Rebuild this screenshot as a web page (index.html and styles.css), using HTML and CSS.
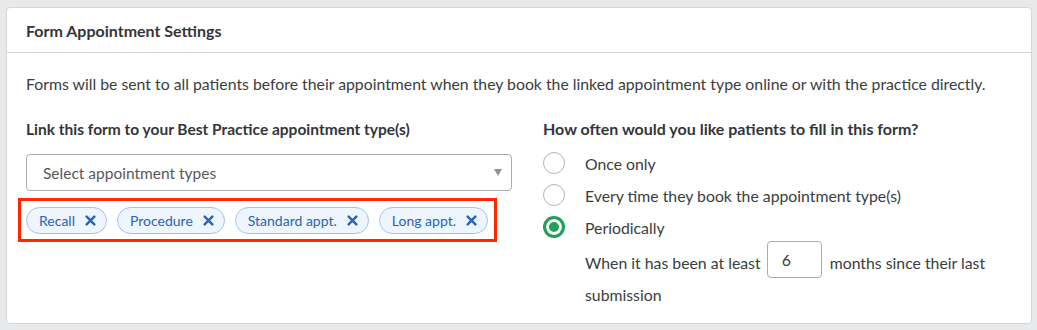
FILE: index.html
```html
<!DOCTYPE html>
<html lang="en">
<head>
<meta charset="utf-8">
<title>Form Appointment Settings</title>
<link rel="stylesheet" href="styles.css">
</head>
<body>
<div class="card">
  <div class="card-header">Form Appointment Settings</div>
  <div class="card-body">
    <p class="desc">Forms will be sent to all patients before their appointment when they book the linked appointment type online or with the practice directly.</p>
    <div class="cols">
      <div class="col-left">
        <div class="label label-left">Link this form to your Best Practice appointment type(s)</div>
        <div class="select">
          <span class="placeholder">Select appointment types</span>
          <span class="caret"></span>
        </div>
        <div class="tags">
          <span class="tag">Recall<svg class="x" viewBox="0 0 10 10"><path d="M1.5 1.5 8.5 8.5M8.5 1.5 1.5 8.5"/></svg></span>
          <span class="tag">Procedure<svg class="x" viewBox="0 0 10 10"><path d="M1.5 1.5 8.5 8.5M8.5 1.5 1.5 8.5"/></svg></span>
          <span class="tag">Standard appt.<svg class="x" viewBox="0 0 10 10"><path d="M1.5 1.5 8.5 8.5M8.5 1.5 1.5 8.5"/></svg></span>
          <span class="tag">Long appt.<svg class="x" viewBox="0 0 10 10"><path d="M1.5 1.5 8.5 8.5M8.5 1.5 1.5 8.5"/></svg></span>
        </div>
      </div>
      <div class="col-right">
        <div class="label">How often would you like patients to fill in this form?</div>
        <div class="radios">
          <div class="radio"><span class="circle"></span><span>Once only</span></div>
          <div class="radio"><span class="circle"></span><span>Every time they book the appointment type(s)</span></div>
          <div class="radio"><span class="circle checked"></span><span>Periodically</span></div>
        </div>
        <p class="period">When it has been at least <span class="num">6</span> months since their last submission</p>
      </div>
    </div>
  </div>
</div>
</body>
</html>
```
FILE: styles.css
```css
html, body {
  margin: 0;
  padding: 0;
  background: #e8e9eb;
  font-family: Lato, "Open Sans", sans-serif;
  color: #333639;
}
.card {
  margin: 7px 5px 0 6px;
  background: #fff;
  border: 1px solid #d6d7d9;
  border-radius: 4px;
  box-sizing: border-box;
  height: 317px;
}
.card-header {
  height: 45px;
  box-sizing: border-box;
  padding: 0 19px;
  display: flex;
  align-items: center;
  font-size: 16px;
  font-weight: bold;
  border-bottom: 1px solid #d6d7d9;
}
.card-body {
  padding: 20px 19px 0 19px;
}
.desc {
  margin: 0;
  font-size: 15.8px;
  line-height: 22px;
  color: #3a3d40;
}
.cols {
  display: flex;
  gap: 31px;
  margin-top: 23px;
}
.col-left {
  width: 486px;
  flex: none;
}
.col-right {
  flex: 1;
  min-width: 0;
}
.label {
  font-size: 16px;
  font-weight: bold;
  line-height: 22px;
}
.label-left {
  font-size: 15.5px;
}
.select {
  margin-top: 14px;
  height: 37px;
  box-sizing: border-box;
  border: 1px solid #a9abae;
  border-radius: 4px;
  display: flex;
  align-items: center;
  justify-content: space-between;
  padding: 0 9px 0 16px;
}
.placeholder {
  font-size: 15.5px;
  color: #55585b;
}
.caret {
  width: 0;
  height: 0;
  border-left: 4px solid transparent;
  border-right: 4px solid transparent;
  border-top: 7px solid #8f9194;
}
.tags {
  margin: 7px 0 0 -8px;
  width: 479px;
  box-sizing: border-box;
  border: 3px solid #ff2600;
  padding: 6px 5px 5px 5px;
  display: flex;
  gap: 10px;
}
.tag {
  display: inline-flex;
  align-items: center;
  height: 27px;
  box-sizing: border-box;
  padding: 0 10px 0 12px;
  border: 1px solid #9fc2ec;
  border-radius: 14px;
  background: #eef5fd;
  color: #2a63b9;
  font-size: 14px;
}
.x {
  width: 11px;
  height: 11px;
  margin-left: 10px;
  fill: none;
  stroke: #2a63b9;
  stroke-width: 2.2;
  stroke-linecap: round;
}
.radios {
  margin-top: 12px;
  display: flex;
  flex-direction: column;
  gap: 10px;
}
.radio {
  display: flex;
  align-items: center;
  gap: 20px;
  height: 22px;
  font-size: 15.8px;
  color: #3a3d40;
}
.circle {
  width: 22px;
  height: 22px;
  box-sizing: border-box;
  border: 1px solid #b3b5b8;
  border-radius: 50%;
  flex: none;
  background: #fff;
}
.circle.checked {
  border: 3px solid #21a05a;
  box-shadow: inset 0 0 0 3px #fff;
  background: #21a05a;
}
.period {
  margin: 6px 0 0 42px;
  font-size: 15.8px;
  line-height: 32px;
  color: #3a3d40;
}
.num {
  display: inline-block;
  width: 55px;
  height: 37px;
  box-sizing: border-box;
  border: 1px solid #a9abae;
  border-radius: 4px;
  line-height: 35px;
  padding-left: 14px;
  margin: -3px 4px -3px 2px;
  vertical-align: 3px;
}
```
